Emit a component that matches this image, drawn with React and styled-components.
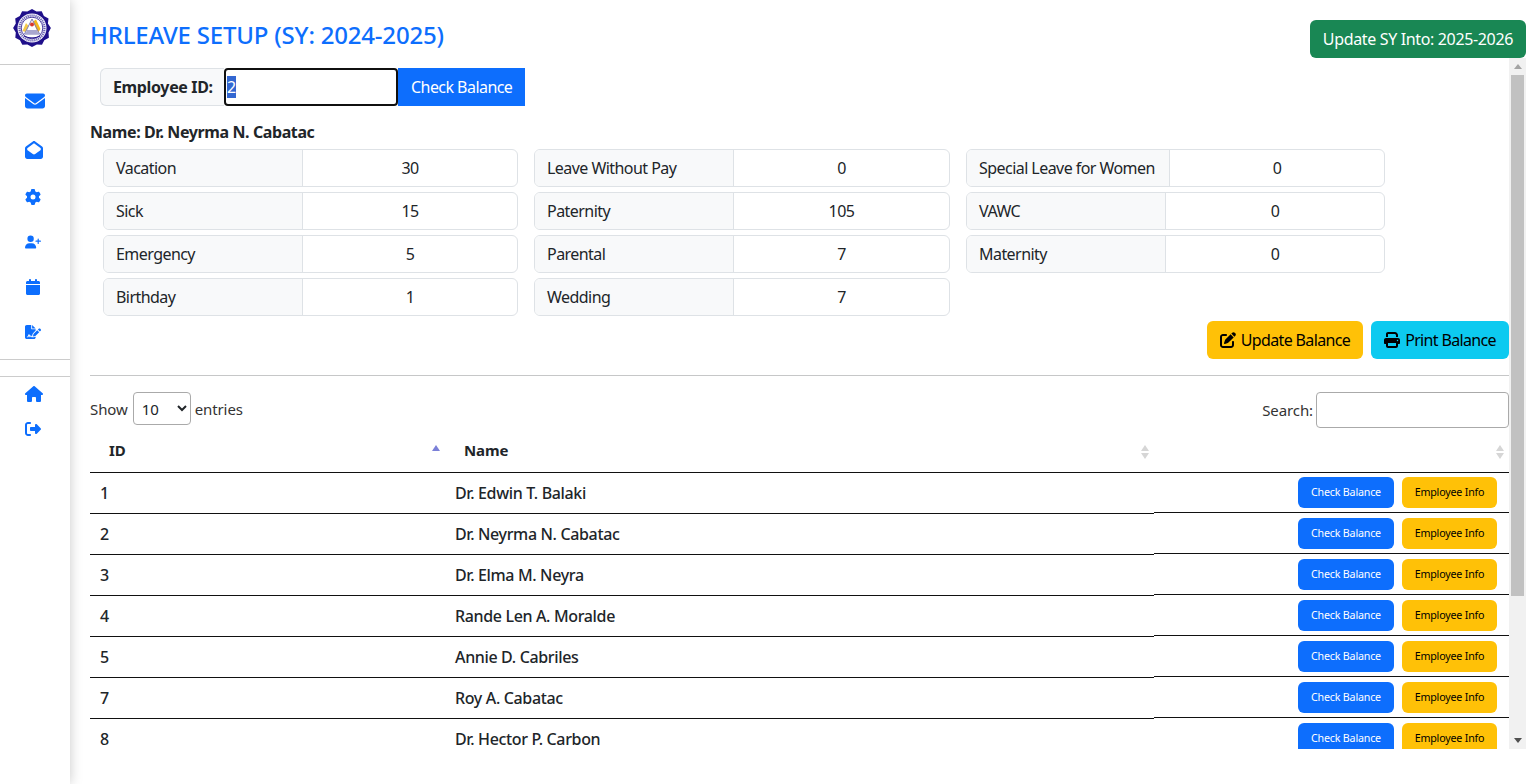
import { useEffect, useRef } from "react";
import styled, { createGlobalStyle } from "styled-components";
import {
	FaEnvelope,
	FaEnvelopeOpen,
	FaGear,
	FaUserPlus,
	FaCalendar,
	FaFileSignature,
	FaHouse,
	FaRightFromBracket,
	FaPenToSquare,
	FaPrint,
} from "react-icons/fa6";

const GlobalStyle = createGlobalStyle`
	* {
		box-sizing: border-box;
	}
	html, body {
		margin: 0;
		height: 100%;
		overflow: hidden;
		background: #fff;
	}
	body {
		font-family: "Noto Sans", "Open Sans", sans-serif;
		font-size: 16px;
		letter-spacing: -0.55px;
		color: #212529;
	}
`;

const Page = styled.div`
	display: flex;
	height: 784px;
`;

const Sidebar = styled.aside`
	width: 70px;
	flex: none;
	display: flex;
	flex-direction: column;
	background: #fff;
	box-shadow: 0 0 12px rgba(0, 0, 0, 0.22);
`;

const LogoBox = styled.div`
	height: 65px;
	padding: 9px 0 0 13px;
	border-bottom: 1px solid #cccccc;
`;

const NavGroup = styled.nav`
	display: flex;
	flex-direction: column;
	height: ${(p) => p.$height}px;
	padding-top: ${(p) => p.$top}px;
	border-bottom: ${(p) => (p.$line ? "1px solid #cccccc" : "none")};
`;

const NavIcon = styled.a`
	height: ${(p) => p.$height}px;
	padding-left: 25px;
	display: flex;
	align-items: center;
	color: #0d6efd;
	font-size: ${(p) => p.$size}px;
`;

const Spacer = styled.div`
	height: 17px;
	border-bottom: 1px solid #cccccc;
`;

const Main = styled.main`
	flex: 1;
	min-width: 0;
	display: flex;
	flex-direction: column;
	padding: 0 9px 35px 20px;
`;

const Header = styled.header`
	height: 58px;
	flex: none;
	display: flex;
	justify-content: space-between;
	align-items: flex-end;
`;

const Title = styled.h3`
	margin: 0 0 8px;
	font-size: 24px;
	line-height: 30px;
	font-weight: 500;
	letter-spacing: -0.2px;
	color: #0d6efd;
`;

const Button = styled.button`
	font: inherit;
	letter-spacing: inherit;
	border: 0;
	height: 38px;
	padding: 0 13px;
	border-radius: ${(p) => (p.$square ? 0 : 6)}px;
	background: ${(p) => p.$bg};
	color: ${(p) => p.$fg || "#fff"};
	display: inline-flex;
	align-items: center;
	justify-content: center;
	gap: 5px;
	white-space: nowrap;
`;

const UpdateYearButton = styled(Button)`
	letter-spacing: -0.35px;
`;

const SmallButton = styled(Button)`
	height: 31px;
	width: ${(p) => p.$w}px;
	padding: 0 0 2px;
	font-size: 10.7px;
	letter-spacing: -0.2px;
`;

const ScrollArea = styled.div`
	flex: 1;
	min-height: 0;
	display: flex;
`;

const ScrollContent = styled.div`
	flex: 1;
	min-width: 0;
	padding-top: 10px;
	overflow: hidden;
`;

const ScrollTrack = styled.div`
	width: 17px;
	flex: none;
	display: flex;
	flex-direction: column;
	align-items: center;
	background: #f1f1f1;
`;

const ScrollArrow = styled.div`
	height: 17px;
	flex: none;
	display: flex;
	align-items: center;
	justify-content: center;
	&::before {
		content: "";
		border-left: 4.5px solid transparent;
		border-right: 4.5px solid transparent;
		${(p) =>
			p.$down
				? "border-top: 5px solid #505050;"
				: "border-bottom: 5px solid #a3a3a3;"}
	}
`;

const ScrollThumb = styled.div`
	width: 13px;
	height: 521px;
	flex: none;
	background: #c1c1c1;
`;

const ScrollRest = styled.div`
	flex: 1;
`;

const EmployeeGroup = styled.div`
	display: flex;
	height: 38px;
	margin-left: 10px;
`;

const EmployeeLabel = styled.label`
	width: 124px;
	padding-left: 12px;
	display: flex;
	align-items: center;
	font-weight: 700;
	letter-spacing: -0.35px;
	background: #f8f9fa;
	border: 1px solid #dee2e6;
	border-right: 0;
	border-radius: 6px 0 0 6px;
`;

const EmployeeInput = styled.input`
	width: 174px;
	padding: 0 1px;
	font: inherit;
	color: #212529;
	border: 2px solid #101010;
	border-radius: 4px;
	outline: none;
	&::selection {
		background: #3367d1;
		color: #fff;
	}
`;

const EmployeeName = styled.div`
	margin: 15px 0 6px;
	font-weight: 700;
	font-size: 16px;
	letter-spacing: -0.4px;
	line-height: 22px;
`;

const BalanceGrid = styled.div`
	display: grid;
	grid-template-columns: 415px 416px 419px;
	column-gap: 16px;
	margin-left: 13px;
`;

const BalanceColumn = styled.div`
	display: flex;
	flex-direction: column;
	gap: 5px;
`;

const BalanceRow = styled.div`
	display: flex;
	height: 38px;
	border: 1px solid #dee2e6;
	border-radius: 6px;
	overflow: hidden;
`;

const BalanceLabel = styled.div`
	width: ${(p) => p.$w || 199}px;
	flex: none;
	padding-left: 12px;
	display: flex;
	align-items: center;
	white-space: nowrap;
	background: #f8f9fa;
	border-right: 1px solid #dee2e6;
`;

const BalanceValue = styled.div`
	flex: 1;
	display: flex;
	align-items: center;
	justify-content: center;
`;

const ActionBar = styled.div`
	display: flex;
	justify-content: flex-end;
	gap: 8px;
	margin-top: 5px;
	letter-spacing: -0.65px;
`;

const Divider = styled.hr`
	margin: 16px 0 16px;
	border: 0;
	border-top: 1px solid #c6c7c8;
`;

const TableControls = styled.div`
	display: flex;
	justify-content: space-between;
	align-items: flex-start;
	font-size: 15px;
	letter-spacing: -0.1px;
	color: #333;
`;

const ControlLabel = styled.label`
	display: flex;
	align-items: center;
	gap: ${(p) => p.$gap}px;
	height: ${(p) => p.$h}px;
`;

const EntriesSelect = styled.select`
	width: 58px;
	height: 33px;
	margin-left: 1px;
	padding-left: 4px;
	font: inherit;
	font-size: 15px;
	color: #212529;
	background: #fff;
	border: 1px solid #aaa;
	border-radius: 4px;
`;

const SearchInput = styled.input`
	width: 193px;
	height: 36px;
	border: 1px solid #aaa;
	border-radius: 4px;
	background: #fff;
`;

const Table = styled.table`
	width: 100%;
	table-layout: fixed;
	border-collapse: separate;
	border-spacing: 0;
	margin-top: 2px;
`;

const HeadCell = styled.th`
	height: 43px;
	padding: 0 18px 2px 19px;
	text-align: left;
	font-size: 15px;
	letter-spacing: -0.1px;
	font-weight: 700;
	border-bottom: 1px solid #111;
	position: relative;
`;

const SortIcon = styled.svg`
	position: absolute;
	right: 4px;
	top: 13px;
	width: 10px;
	height: 16px;
`;

const Cell = styled.td`
	height: 41px;
	padding: 0 10px;
	font-weight: 500;
	letter-spacing: -0.35px;
	border-bottom: 1px solid #111;
`;

const ActionCell = styled.td`
	height: 41px;
	padding: 0 0 1px;
`;

const ActionWrap = styled.div`
	height: 40px;
	padding: 0 12px 4px 0;
	display: flex;
	justify-content: flex-end;
	align-items: flex-end;
	gap: 8px;
	border-bottom: 1px solid #111;
`;

const Logo = () => (
	<svg width="38" height="38" viewBox="0 0 38 38">
		<path
			d="M19 0l4.500 2.600 5.200-.3 2.200 4.700 4.600 2.400-.6 5.200L37.900 19l-2.400 4.600.4 5.200-4.600 2.400-2.300 4.600-5.100-.3L19 38l-4.600-2.500-5.100.3L7 31.200l-4.700-2.400.5-5.200L.1 19l2.700-4.400-.6-5.200L6.800 7l2.300-4.700 5.200.3z"
			fill="#1f0f8a"
		/>
		<circle cx="19" cy="19" r="14.500" fill="#f4f3fb" />
		<circle cx="19" cy="19" r="12.500" fill="none" stroke="#6a63b4" strokeWidth="2.200" strokeDasharray="1.200 .8" />
		<circle cx="19" cy="19" r="10.800" fill="#fff" stroke="#1f0f8a" strokeWidth=".8" />
		<path d="M23 10.500l4.500 9.500-2.500 3.500-5-11z" fill="#f5b81c" />
		<path d="M13 14l-3.500 8 3 1 3-6z" fill="#f5c94a" />
		<path d="M19 10l-7.500 15h15z" fill="none" stroke="#7b78b4" strokeWidth="1" />
		<path d="M14 21h10l1.500 4h-13z" fill="#a9a7cf" />
		<circle cx="19" cy="15.500" r="2" fill="#d8352a" />
		<path d="M11 27c5 2.500 11 2.500 16 0" fill="none" stroke="#1f0f8a" strokeWidth="1" />
	</svg>
);

const Sort = ({ active }) => (
	<SortIcon viewBox="0 0 10 16">
		<path d="M5 2l4 6H1z" fill={active ? "#7b80d8" : "#d6d6d6"} />
		{!active && <path d="M5 16l4-6H1z" fill="#d6d6d6" />}
	</SortIcon>
);

const balances = [
	[
		["Vacation", 30],
		["Sick", 15],
		["Emergency", 5],
		["Birthday", 1],
	],
	[
		["Leave Without Pay", 0],
		["Paternity", 105],
		["Parental", 7],
		["Wedding", 7],
	],
	[
		["Special Leave for Women", 0, 203],
		["VAWC", 0],
		["Maternity", 0],
	],
];

const employees = [
	[1, "Dr. Edwin T. Balaki"],
	[2, "Dr. Neyrma N. Cabatac"],
	[3, "Dr. Elma M. Neyra"],
	[4, "Rande Len A. Moralde"],
	[5, "Annie D. Cabriles"],
	[7, "Roy A. Cabatac"],
	[8, "Dr. Hector P. Carbon"],
];

export default function App() {
	const idInput = useRef(null);

	useEffect(() => {
		idInput.current.focus();
		idInput.current.select();
	}, []);

	return (
		<Page>
			<GlobalStyle />
			<Sidebar>
				<LogoBox>
					<Logo />
				</LogoBox>
				<NavGroup $height={295} $top={13} $line>
					<NavIcon $height={46} $size={20}><FaEnvelope /></NavIcon>
					<NavIcon $height={51} $size={18}><FaEnvelopeOpen /></NavIcon>
					<NavIcon $height={44} $size={16}><FaGear /></NavIcon>
					<NavIcon $height={45} $size={16}><FaUserPlus /></NavIcon>
					<NavIcon $height={45} $size={16}><FaCalendar /></NavIcon>
					<NavIcon $height={45} $size={16}><FaFileSignature /></NavIcon>
				</NavGroup>
				<Spacer />
				<NavGroup $height={80} $top={0}>
					<NavIcon $height={33} $size={18}><FaHouse /></NavIcon>
					<NavIcon $height={37} $size={16}><FaRightFromBracket /></NavIcon>
				</NavGroup>
			</Sidebar>
			<Main>
				<Header>
					<Title>HRLEAVE SETUP (SY: 2024-2025)</Title>
					<UpdateYearButton $bg="#198754">Update SY Into: 2025-2026</UpdateYearButton>
				</Header>
				<ScrollArea>
					<ScrollContent>
						<EmployeeGroup>
							<EmployeeLabel>Employee ID:</EmployeeLabel>
							<EmployeeInput ref={idInput} defaultValue="2" />
							<Button $bg="#0d6efd" $square>Check Balance</Button>
						</EmployeeGroup>
						<EmployeeName>Name: Dr. Neyrma N. Cabatac</EmployeeName>
						<BalanceGrid>
							{balances.map((column, i) => (
								<BalanceColumn key={i}>
									{column.map(([label, value, width]) => (
										<BalanceRow key={label}>
											<BalanceLabel $w={width}>{label}</BalanceLabel>
											<BalanceValue>{value}</BalanceValue>
										</BalanceRow>
									))}
								</BalanceColumn>
							))}
						</BalanceGrid>
						<ActionBar>
							<Button $bg="#ffc107" $fg="#000"><FaPenToSquare /> Update Balance</Button>
							<Button $bg="#0dcaf0" $fg="#000"><FaPrint /> Print Balance</Button>
						</ActionBar>
						<Divider />
						<TableControls>
							<ControlLabel $gap={4} $h={33}>
								Show
								<EntriesSelect defaultValue="10">
									<option>10</option>
									<option>25</option>
									<option>50</option>
									<option>100</option>
								</EntriesSelect>
								entries
							</ControlLabel>
							<ControlLabel $gap={3} $h={36}>
								Search:
								<SearchInput />
							</ControlLabel>
						</TableControls>
						<Table>
							<colgroup>
								<col style={{ width: 355 }} />
								<col style={{ width: 709 }} />
								<col style={{ width: 355 }} />
							</colgroup>
							<thead>
								<tr>
									<HeadCell>ID<Sort active /></HeadCell>
									<HeadCell>Name<Sort /></HeadCell>
									<HeadCell><Sort /></HeadCell>
								</tr>
							</thead>
							<tbody>
								{employees.map(([id, name]) => (
									<tr key={id}>
										<Cell>{id}</Cell>
										<Cell>{name}</Cell>
										<ActionCell>
											<ActionWrap>
												<SmallButton $bg="#0d6efd" $w={96}>Check Balance</SmallButton>
												<SmallButton $bg="#ffc107" $fg="#000" $w={95}>Employee Info</SmallButton>
											</ActionWrap>
										</ActionCell>
									</tr>
								))}
							</tbody>
						</Table>
					</ScrollContent>
					<ScrollTrack>
						<ScrollArrow />
						<ScrollThumb />
						<ScrollRest />
						<ScrollArrow $down />
					</ScrollTrack>
				</ScrollArea>
			</Main>
		</Page>
	);
}
